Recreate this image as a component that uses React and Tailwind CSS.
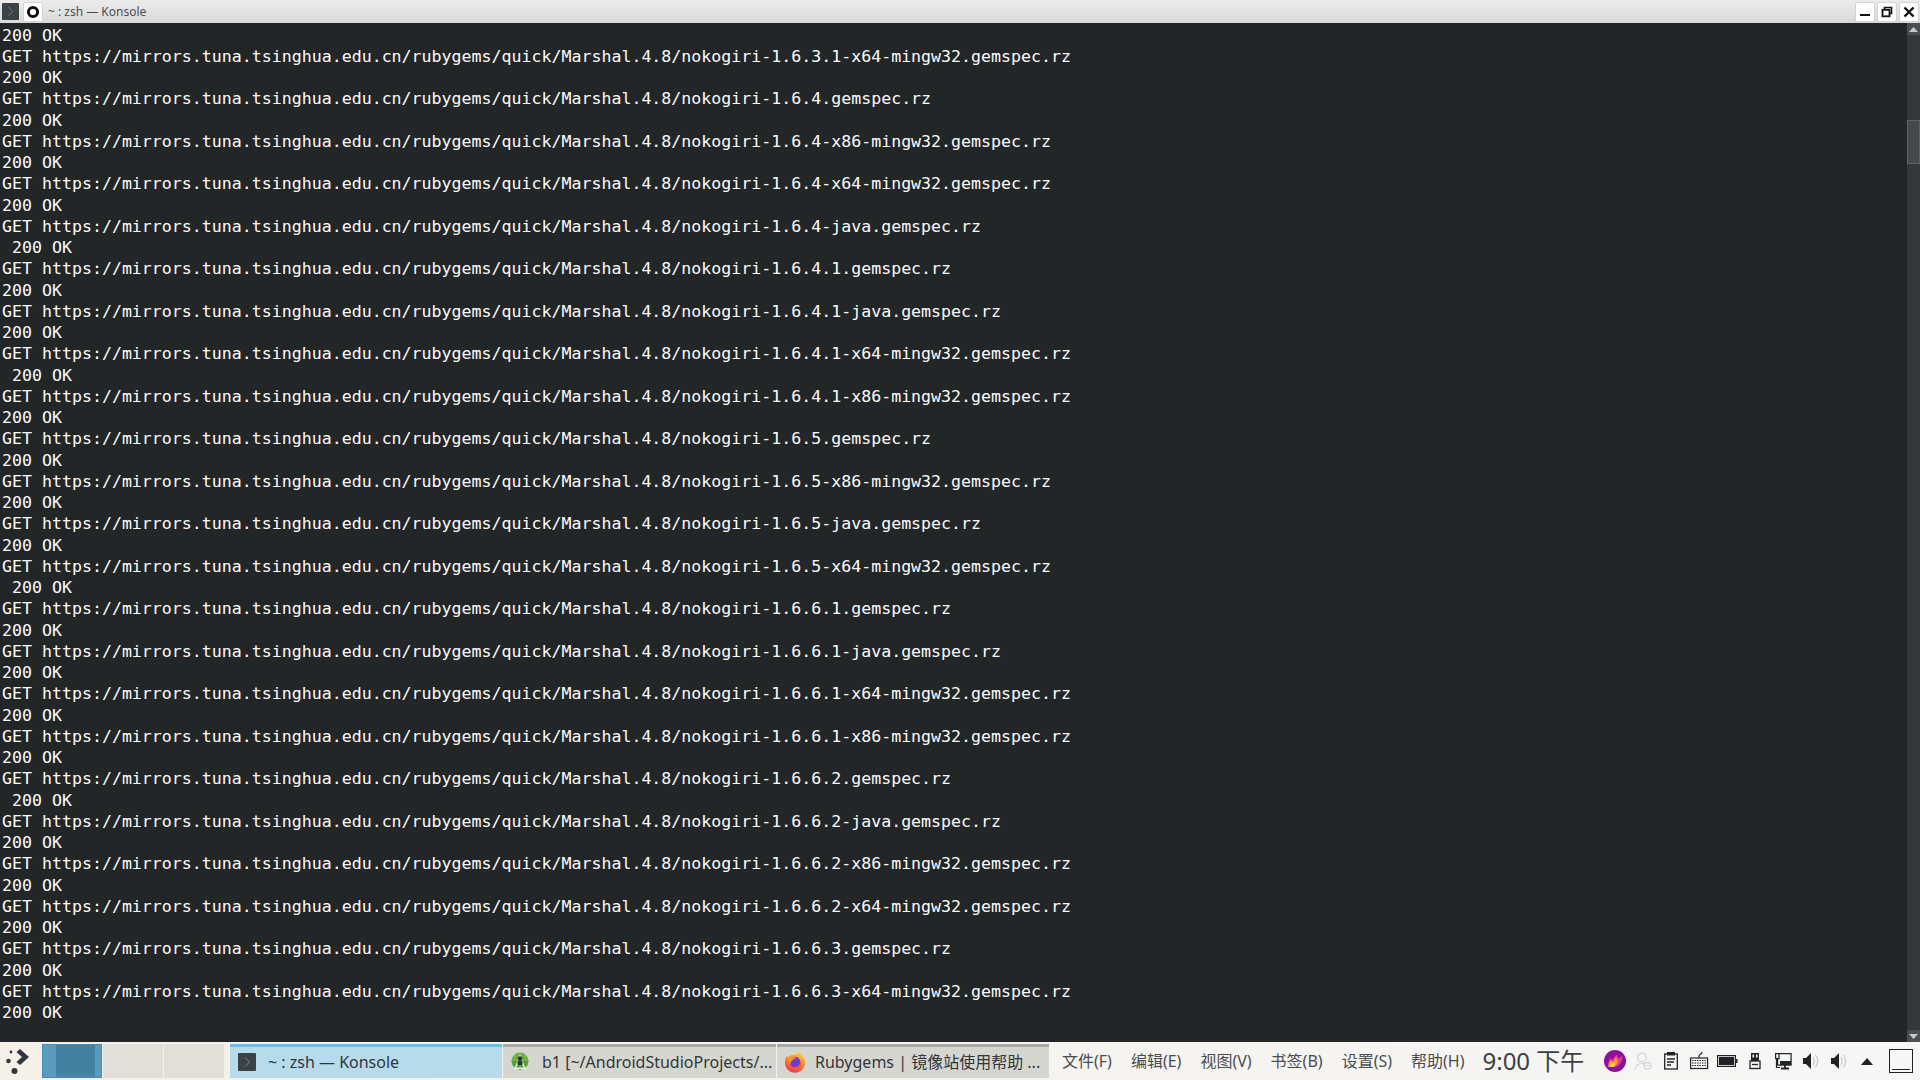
import React from "react";

const BASE = "https://mirrors.tuna.tsinghua.edu.cn/rubygems/quick/Marshal.4.8/nokogiri-";

const gems = [
  ["1.6.3.1-x64-mingw32", false],
  ["1.6.4", false],
  ["1.6.4-x86-mingw32", false],
  ["1.6.4-x64-mingw32", false],
  ["1.6.4-java", true],
  ["1.6.4.1", false],
  ["1.6.4.1-java", false],
  ["1.6.4.1-x64-mingw32", true],
  ["1.6.4.1-x86-mingw32", false],
  ["1.6.5", false],
  ["1.6.5-x86-mingw32", false],
  ["1.6.5-java", false],
  ["1.6.5-x64-mingw32", true],
  ["1.6.6.1", false],
  ["1.6.6.1-java", false],
  ["1.6.6.1-x64-mingw32", false],
  ["1.6.6.1-x86-mingw32", false],
  ["1.6.6.2", true],
  ["1.6.6.2-java", false],
  ["1.6.6.2-x86-mingw32", false],
  ["1.6.6.2-x64-mingw32", false],
  ["1.6.6.3", false],
  ["1.6.6.3-x64-mingw32", false],
];

const menus = ["文件(F)", "编辑(E)", "视图(V)", "书签(B)", "设置(S)", "帮助(H)"];

function KonsoleIcon({ size }) {
  return (
    <svg width={size} height={size} viewBox="0 0 18 18" className="shrink-0">
      <rect width="18" height="18" rx="1" fill="#3b4346" />
      <path d="M7 4.5 L11.5 9 L7 13.5" fill="none" stroke="#7d8286" strokeWidth="1" />
    </svg>
  );
}

function WindowButton({ children }) {
  return (
    <div className="flex h-[20px] w-[20px] items-center justify-center rounded-[2px] border border-[#d4d4d4] bg-white">
      {children}
    </div>
  );
}

function TitleBar() {
  return (
    <div className="flex h-[23px] shrink-0 items-center bg-gradient-to-b from-[#ececec] to-[#d9d9d9] pl-[2px] pr-[1px]">
      <KonsoleIcon size={17} />
      <div className="ml-[4px]">
        <WindowButton>
          <svg width="14" height="14" viewBox="0 0 14 14">
            <circle cx="7" cy="7" r="4.6" fill="none" stroke="#111" strokeWidth="3" />
          </svg>
        </WindowButton>
      </div>
      <span className="ml-[5px] font-['Noto_Sans',sans-serif] text-[12px] leading-none text-[#4b4f52]">
        ~ : zsh — Konsole
      </span>
      <div className="ml-auto flex gap-[2px]">
        <WindowButton>
          <svg width="12" height="12" viewBox="0 0 12 12">
            <rect x="1" y="8" width="10" height="2" fill="#111" />
          </svg>
        </WindowButton>
        <WindowButton>
          <svg width="12" height="12" viewBox="0 0 12 12">
            <path d="M3.5 3.5V1.5H10.5V7.5H8.5" fill="none" stroke="#111" strokeWidth="1.6" />
            <rect x="1.5" y="3.8" width="7" height="6.5" fill="none" stroke="#111" strokeWidth="1.8" />
          </svg>
        </WindowButton>
        <WindowButton>
          <svg width="12" height="12" viewBox="0 0 12 12">
            <path d="M1.5 1.5L10.5 10.5M10.5 1.5L1.5 10.5" stroke="#111" strokeWidth="2.4" />
          </svg>
        </WindowButton>
      </div>
    </div>
  );
}

function Scrollbar() {
  return (
    <div className="flex w-[13px] shrink-0 flex-col bg-[#33383b]">
      <div className="flex h-[12px] items-center justify-center bg-[#4a4f52]">
        <svg width="9" height="5" viewBox="0 0 9 5">
          <path d="M4.5 0L9 5H0Z" fill="#c8c9ca" />
        </svg>
      </div>
      <div className="h-[85px]" />
      <div className="h-[44px] border border-[#5c6164] bg-[#45494c]" />
      <div className="flex-1" />
      <div className="flex h-[12px] items-center justify-center bg-[#4a4f52]">
        <svg width="9" height="5" viewBox="0 0 9 5">
          <path d="M0 0H9L4.5 5Z" fill="#c8c9ca" />
        </svg>
      </div>
    </div>
  );
}

function Terminal() {
  const lines = [{ text: "200 OK", indent: false }];
  gems.forEach(([name, indent]) => {
    lines.push({ text: `GET ${BASE}${name}.gemspec.rz`, indent: false });
    lines.push({ text: "200 OK", indent });
  });
  return (
    <div className="flex min-h-0 flex-1 bg-[#232627]">
      <div className="flex-1 overflow-hidden pl-[2px] pt-[1.6px] font-['DejaVu_Sans_Mono',monospace] text-[16.6px] leading-[21.25px] text-[#fcfcfc]">
        {lines.map((line, i) => (
          <div key={i} className={`whitespace-pre ${line.indent ? "pl-[10px]" : ""}`}>
            {line.text}
          </div>
        ))}
      </div>
      <Scrollbar />
    </div>
  );
}

function Launcher() {
  return (
    <svg width="26" height="26" viewBox="0 0 26 26" className="shrink-0">
      <circle cx="6" cy="4" r="1.4" fill="#31363b" />
      <circle cx="3.5" cy="13" r="2.3" fill="#31363b" />
      <circle cx="9.5" cy="23" r="3" fill="#31363b" />
      <path d="M15 1L24 9L15 17L11.5 14L17 9L11.5 4Z" fill="#31363b" />
    </svg>
  );
}

function AndroidIcon() {
  return (
    <svg width="18" height="20" viewBox="0 0 18 20" className="shrink-0">
      <circle cx="9" cy="9" r="8.5" fill="#6ab344" />
      <path d="M0.500 9A8.500 8.500 0 0 0 17.500 9Z" fill="#57a03c" />
      <path d="M4.500 16L9 4L13.500 16" fill="none" stroke="#e6ece2" strokeWidth="1.600" />
      <path d="M3 15.500H15V17H3Z" fill="#e6ece2" />
      <circle cx="9" cy="6.500" r="2.300" fill="#2c3a32" />
      <rect x="6.500" y="8.500" width="5" height="4.500" rx="1" fill="#2c3a32" />
    </svg>
  );
}

function FirefoxIcon() {
  return (
    <svg width="22" height="22" viewBox="0 0 22 22" className="shrink-0">
      <defs>
        <linearGradient id="ffBody" x1="0.700" y1="0" x2="0.300" y2="1">
          <stop offset="0" stopColor="#ffd43a" />
          <stop offset="0.450" stopColor="#ff8a2a" />
          <stop offset="1" stopColor="#f0325c" />
        </linearGradient>
      </defs>
      <path d="M15 0.500C15.500 2.500 18 4 19.500 6.500C21 9 21.500 11 21 13.500A10.200 10.200 0 0 1 0.800 12C0.800 9.500 1.500 6.500 3 4.500C3.200 5.500 3.500 6.300 4 6.800C5 4.800 7 3.800 9 3.800C11.500 3.800 14 3 15 0.500Z" fill="url(#ffBody)" />
      <circle cx="11" cy="11" r="5.300" fill="#6a3fd0" />
      <path d="M4 7C7 5.500 10.500 5.500 12.500 7.500C10.500 7.500 9 8 8.500 9.500C7 10 6 11.500 6.500 13.500C4.500 12 3.500 9.500 4 7Z" fill="#ff8f2b" />
      <path d="M6 14.500C8 16.500 12 16.800 14.500 14.800C16 13.500 16.500 11.500 16 9.500C18 12.500 17 16.500 13.500 18C10.500 19.200 7.500 17.500 6 14.500Z" fill="#f9553a" />
    </svg>
  );
}

function Pager() {
  return (
    <div className="ml-[3px] flex h-[34px] gap-[1px]">
      <div className="flex w-[60px] border border-[#3d8fc4] bg-[#4785a8]">
        <div className="w-[13px] bg-[#5a9abd]" />
        <div className="h-[29px] flex-1 bg-[#41809f]" />
        <div className="w-[6px] bg-[#5a9abd]" />
      </div>
      <div className="w-[60px] bg-[#e0dfd9]" />
      <div className="w-[60px] bg-[#e0dfd9]" />
    </div>
  );
}

function Task({ icon, label, width, active, pad }) {
  return (
    <div
      className={`flex h-[34px] shrink-0 flex-col ${width} ${active ? "bg-[#b6dcec]" : "bg-[#d6d6d0]"}`}
    >
      <div className={`h-[3px] ${active ? "bg-[#6cbde6]" : "bg-[#a9a9a3]"}`} />
      <div className={`flex flex-1 items-center pb-[2px] ${pad} font-['Noto_Sans','Noto_Sans_CJK_SC',sans-serif] text-[16px] leading-none text-[#31363b]`}>
        {icon}
        <span className="whitespace-nowrap">{label}</span>
      </div>
    </div>
  );
}

function TrayIcons() {
  const dark = "#1f2326";
  return (
    <div className="ml-[20px] flex items-center gap-[6px]">
      <svg width="22" height="22" viewBox="0 0 22 22">
        <circle cx="11" cy="11" r="11" fill="#8a139c" />
        <path d="M4 17C3.500 13 5 10 7 7.500C7 9 7.500 10 8.500 10.500C9 8 11 5.500 13.500 4.500C13 6.500 13.500 8 15 8.500C16 8 17.500 7 18.500 5.500C18.500 10 16.500 15 12 17Z" fill="#e83f8c" />
        <path d="M4.500 17C4.500 14 6 11.500 7.500 10C8 11.500 8.500 12 9.500 12C10 10 11 8.500 12.500 7.500C12.500 9.500 13 10.500 14 10.500C13.500 13.500 12 16 9 17Z" fill="#ff9a2e" />
        <path d="M6 17C6 15 7.500 13.500 8.500 13C9 14 10 14 10.500 13C11 14.500 10.500 16 9.500 17Z" fill="#ffe04a" />
      </svg>
      <svg width="22" height="22" viewBox="0 0 22 22" fill="none" stroke="#cdd3d7" strokeWidth="1.200">
        <circle cx="10" cy="7.500" r="4.300" />
        <path d="M3 20C3.500 15.500 6 13.500 10 13.500C10.800 13.500 11.500 13.600 12.200 13.800" />
        <circle cx="15.700" cy="15.700" r="3.400" />
        <path d="M14.200 15.700H17.200" />
      </svg>
      <svg width="22" height="22" viewBox="0 0 22 22" fill="none" stroke={dark} strokeWidth="1.300">
        <rect x="4.700" y="4" width="12.600" height="15" />
        <rect x="7" y="2" width="8" height="3.500" fill={dark} stroke="none" />
        <path d="M7 9H15M7 12H14M7 15H11" />
      </svg>
      <svg width="22" height="22" viewBox="0 0 22 22" fill="none" stroke={dark} strokeWidth="1.200">
        <rect x="2.600" y="8" width="17" height="10.500" />
        <path d="M11 8V6C11 4 14 5 14 2" />
        <path d="M4 10.500H18M4 13H18M4 15.500H18" strokeDasharray="1.500 1" />
      </svg>
      <svg width="22" height="22" viewBox="0 0 22 22">
        <rect x="1.600" y="5.600" width="17.800" height="10.800" fill="none" stroke={dark} strokeWidth="1.200" />
        <rect x="3" y="7" width="15" height="8" fill={dark} />
        <rect x="20" y="9" width="1.500" height="4" fill={dark} />
      </svg>
      <svg width="22" height="22" viewBox="0 0 22 22" fill="none" stroke={dark} strokeWidth="1.300">
        <rect x="7" y="3" width="8" height="8" fill={dark} stroke="none" />
        <rect x="8.500" y="4.500" width="1.600" height="3" fill="#f6f6f6" stroke="none" />
        <rect x="12" y="4.500" width="1.600" height="3" fill="#f6f6f6" stroke="none" />
        <rect x="6" y="11" width="10" height="7.500" />
        <path d="M8 14.500H14" />
      </svg>
      <svg width="22" height="22" viewBox="0 0 22 22" fill="none" stroke={dark} strokeWidth="1.200">
        <rect x="5.600" y="3.600" width="13.500" height="11.500" />
        <rect x="8" y="11" width="11" height="4" fill={dark} stroke="none" />
        <rect x="3.600" y="3.600" width="3.400" height="5" fill="#f6f6f6" />
        <path d="M4.500 8.600V17.500H8" />
        <path d="M13 15V18M9 18.500H17" strokeWidth="1.800" />
      </svg>
      <svg width="22" height="22" viewBox="0 0 22 22" fill="none">
        <path d="M3 8H6L11 3V19L6 14H3Z" fill={dark} />
        <path d="M13 7C14.500 9.500 14.500 12.500 13 15M15.500 5C18.500 9 18.500 13 15.500 17" stroke="#c4c8cb" strokeWidth="1.200" />
      </svg>
      <svg width="22" height="22" viewBox="0 0 22 22" fill="none">
        <path d="M3 8H6L11 3V19L6 14H3Z" fill={dark} />
        <path d="M13 7C14.500 9.500 14.500 12.500 13 15M15.500 5C18.500 9 18.500 13 15.500 17" stroke="#c4c8cb" strokeWidth="1.200" />
      </svg>
      <svg width="22" height="22" viewBox="0 0 22 22">
        <path d="M11 8L17 15H5Z" fill={dark} />
      </svg>
      <div className="ml-[5px] flex h-[24px] w-[24px] items-end justify-center border border-[#1f2326] pb-[2px]">
        <div className="h-[1px] w-[18px] bg-[#1f2326]" />
      </div>
    </div>
  );
}

function Panel() {
  return (
    <div className="flex h-[38px] shrink-0 items-center bg-gradient-to-r from-[#f5f1e8] to-[#f6f6f6] pl-[5px]">
      <Launcher />
      <div className="ml-[8px]">
        <Pager />
      </div>
      <div className="ml-[6px] flex gap-[1px]">
        <Task width="w-[272px]" active pad="pl-[8px] gap-[12px]" icon={<KonsoleIcon size={18} />} label="~ : zsh — Konsole" />
        <Task width="w-[273px]" pad="pl-[8px] gap-[13px]" icon={<AndroidIcon />} label="b1 [~/AndroidStudioProjects/..." />
        <Task width="w-[272px]" pad="pl-[7px] gap-[9px]" icon={<FirefoxIcon />} label="Rubygems | 镜像站使用帮助 ..." />
      </div>
      <div className="ml-[13px] flex gap-[19px] font-['Noto_Sans','Noto_Sans_CJK_SC',sans-serif] text-[16px] leading-none text-[#4a4d50]">
        {menus.map((m) => (
          <span key={m} className="whitespace-nowrap">{m}</span>
        ))}
      </div>
      <div className="ml-[18px] whitespace-nowrap font-['Noto_Sans','Noto_Sans_CJK_SC',sans-serif] text-[24px] leading-none text-[#3c3f42]">
        9:00 下午
      </div>
      <TrayIcons />
    </div>
  );
}

export default function App() {
  return (
    <div className="flex h-screen w-full flex-col overflow-hidden bg-[#232627]">
      <TitleBar />
      <Terminal />
      <Panel />
    </div>
  );
}
